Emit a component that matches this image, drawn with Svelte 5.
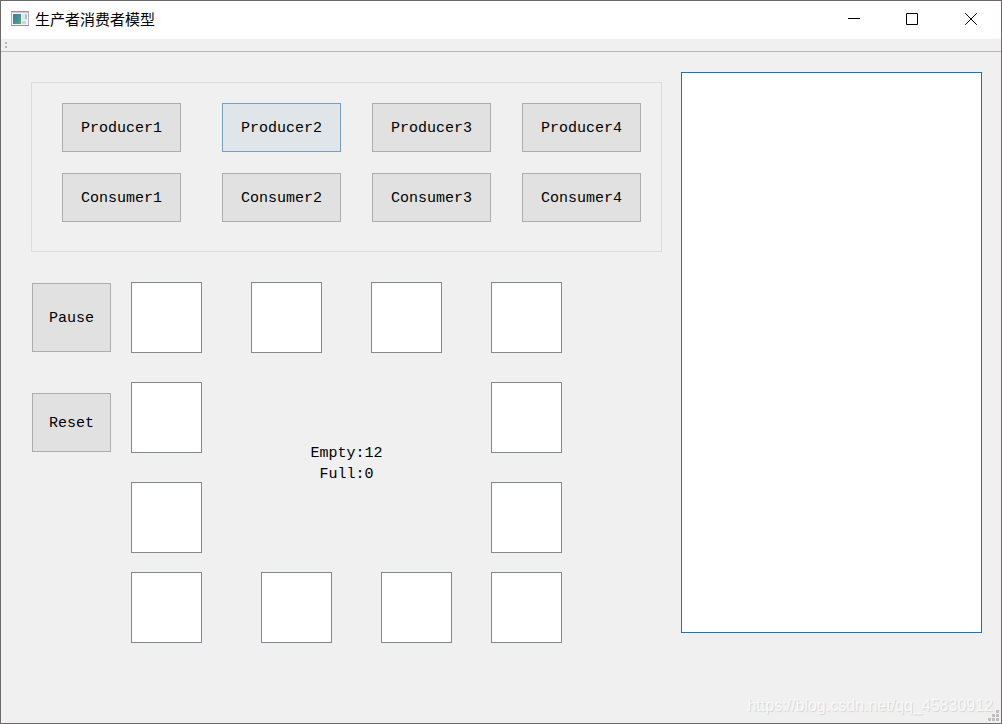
<script>
	const actors = [1, 2, 3, 4];
	const SIZE = 12;

	let slots = $state(Array(SIZE).fill(''));
	let log = $state('');
	let paused = $state(false);
	let nextIn = $state(0);
	let nextOut = $state(0);

	let full = $derived(slots.filter((s) => s !== '').length);
	let empty = $derived(SIZE - full);

	function write(line) {
		log += line + '\n';
	}

	function produce(id) {
		if (paused || empty === 0) return;
		slots[nextIn] = 'P' + id;
		write(`Producer${id} -> ${nextIn}`);
		nextIn = (nextIn + 1) % SIZE;
	}

	function consume(id) {
		if (paused || full === 0) return;
		slots[nextOut] = '';
		write(`Consumer${id} <- ${nextOut}`);
		nextOut = (nextOut + 1) % SIZE;
	}

	function reset() {
		slots = Array(SIZE).fill('');
		log = '';
		paused = false;
		nextIn = 0;
		nextOut = 0;
	}
</script>

{#snippet slot(i)}
	<input class="slot" readonly aria-label="Slot {i + 1}" value={slots[i]} />
{/snippet}

<div class="window">
	<header class="titlebar">
		<svg class="app-icon" width="18" height="16" viewBox="0 0 18 16" aria-hidden="true">
			<defs>
				<linearGradient id="pane" x1="0" y1="0" x2="1" y2="1">
					<stop offset="0" stop-color="#4a78b4" />
					<stop offset="0.5" stop-color="#438f93" />
					<stop offset="1" stop-color="#56b06c" />
				</linearGradient>
			</defs>
			<rect x="0.5" y="0.5" width="17" height="14" fill="#f4f4f6" stroke="#b5b1ba" />
			<rect x="0" y="0" width="18" height="1" fill="#b08c98" />
			<rect x="1" y="1" width="16" height="1" fill="#dcc4cc" />
			<rect x="2" y="3" width="8" height="10" fill="url(#pane)" />
			<rect x="11" y="3" width="5" height="6" fill="#dfe6ec" />
			<rect x="14" y="3" width="2" height="5" fill="#a9c8d4" />
			<rect x="11" y="10" width="4" height="3" fill="#d4d4d8" />
			<rect x="0" y="14" width="18" height="1" fill="#96929a" />
		</svg>
		<h1>生产者消费者模型</h1>
		<div class="window-buttons">
			<button aria-label="Minimize">
				<svg width="13" height="12" viewBox="0 0 13 12"><path d="M1 5.5H13" /></svg>
			</button>
			<button aria-label="Maximize">
				<svg width="13" height="12" viewBox="0 0 13 12"><path d="M0.5 0.5H11.5V11.5H0.5Z" /></svg>
			</button>
			<button aria-label="Close">
				<svg width="13" height="12" viewBox="0 0 13 12"><path d="M0.2 0.2L11.8 11.8M11.8 0.2L0.2 11.8" /></svg>
			</button>
		</div>
	</header>

	<div class="toolbar">
		<span class="handle"></span>
	</div>

	<main>
		<div class="left">
			<section class="actors">
				{#each actors as id}
					<button class="btn" class:hot={id === 2} onclick={() => produce(id)}>Producer{id}</button>
				{/each}
				{#each actors as id}
					<button class="btn" onclick={() => consume(id)}>Consumer{id}</button>
				{/each}
			</section>

			<section class="bench">
				<div class="controls">
					<button class="btn pause" onclick={() => (paused = !paused)}>Pause</button>
					<button class="btn reset" onclick={reset}>Reset</button>
				</div>

				<!-- slots run clockwise from the top left corner -->
				<div class="ring">
					<div class="row top">
						{#each [0, 1, 2, 3] as i}{@render slot(i)}{/each}
					</div>
					<div class="middle">
						<div class="side">
							{#each [11, 10] as i}{@render slot(i)}{/each}
						</div>
						<p class="count">Empty:{empty}<br />Full:{full}</p>
						<div class="side">
							{#each [4, 5] as i}{@render slot(i)}{/each}
						</div>
					</div>
					<div class="row bottom">
						{#each [9, 8, 7, 6] as i}{@render slot(i)}{/each}
					</div>
				</div>
			</section>
		</div>

		<textarea class="log" readonly aria-label="Log" value={log}></textarea>
	</main>

	<span class="watermark">https://blog.csdn.net/qq_45830912</span>
	<svg class="grip" width="11" height="11" viewBox="0 0 11 11" aria-hidden="true">
		<path d="M8 0h3v3h-3zM4 4h3v3h-3zM8 4h3v3h-3zM0 8h3v3h-3zM4 8h3v3h-3zM8 8h3v3h-3z" />
	</svg>
</div>

<style>
	:global(body) {
		margin: 0;
	}

	.window {
		position: relative;
		box-sizing: border-box;
		min-height: 100vh;
		border: 1px solid #6b6969;
		background: #f0f0f0;
		color: #000;
		font-family: 'Liberation Mono', 'Noto Sans CJK SC', monospace;
		font-size: 15px;
	}

	button,
	input,
	textarea {
		box-sizing: border-box;
		margin: 0;
		padding: 0;
		border-radius: 0;
		font: inherit;
		color: inherit;
	}

	.titlebar {
		display: flex;
		align-items: center;
		height: 36px;
		padding: 0 0 2px 10px;
		background: #fff;
	}

	h1 {
		margin: 0 0 0 6px;
		font: 15px/20px 'Noto Sans CJK SC', sans-serif;
	}

	.window-buttons {
		display: flex;
		align-self: stretch;
		margin-left: auto;
	}

	.window-buttons button {
		display: flex;
		align-items: center;
		justify-content: center;
		width: 59px;
		border: 0;
		background: none;
	}

	.window-buttons path {
		fill: none;
		stroke: #000;
	}

	.toolbar {
		display: flex;
		height: 12px;
		padding-left: 4px;
		border-bottom: 1px solid #b8b8b8;
	}

	.handle {
		width: 2px;
		height: 2px;
		margin-top: 3px;
		background: #b4b4b4;
		box-shadow: 0 4px #b4b4b4;
	}

	main {
		display: grid;
		grid-template-columns: 1fr 301px;
		gap: 19px;
		align-items: start;
		padding: 20px 19px 20px 30px;
	}

	.left {
		padding-top: 10px;
	}

	.actors {
		display: grid;
		grid-template-columns: 129fr 119fr 119fr 119fr;
		gap: 21px 31px;
		padding: 20px 20px 29px 30px;
		border: 1px solid #dcdcdc;
	}

	.btn {
		width: 119px;
		height: 49px;
		padding-top: 2px;
		border: 1px solid #adadad;
		background: #e1e1e1;
	}

	.btn.hot {
		border-color: #7a9ebd;
		background: #e0e5e9;
	}

	.bench {
		display: flex;
		gap: 20px;
		padding-top: 30px;
	}

	.controls {
		display: flex;
		flex-direction: column;
		gap: 41px;
		padding: 1px 0 0 1px;
	}

	.controls .btn {
		width: 79px;
	}

	.controls .pause {
		height: 69px;
	}

	.controls .reset {
		height: 59px;
	}

	.ring {
		width: 431px;
	}

	.row {
		display: grid;
	}

	.top {
		grid-template-columns: 120px 120px 120px 71px;
	}

	.bottom {
		grid-template-columns: 130px 120px 110px 71px;
	}

	.middle {
		display: flex;
		justify-content: space-between;
		padding: 29px 0 19px;
	}

	.side {
		display: flex;
		flex-direction: column;
		gap: 29px;
	}

	.slot {
		display: block;
		width: 71px;
		height: 71px;
		border: 1px solid #828790;
		background: #fff;
		text-align: center;
		outline: none;
	}

	.count {
		align-self: center;
		margin: 0;
		padding-bottom: 8px;
		line-height: 21px;
		text-align: center;
	}

	.log {
		display: block;
		width: 100%;
		height: 561px;
		padding: 4px;
		border: 1px solid #0078d7;
		background: #fff;
		resize: none;
		outline: none;
	}

	.watermark {
		position: absolute;
		right: 8px;
		bottom: 8px;
		color: #f8f8f8;
		font: 16px/18px 'Liberation Sans', Arial, sans-serif;
		text-shadow: 1px 1px 1px #d4d4d4;
		pointer-events: none;
	}

	.grip {
		position: absolute;
		right: 2px;
		bottom: 2px;
		fill: #bfbfbf;
	}
</style>
